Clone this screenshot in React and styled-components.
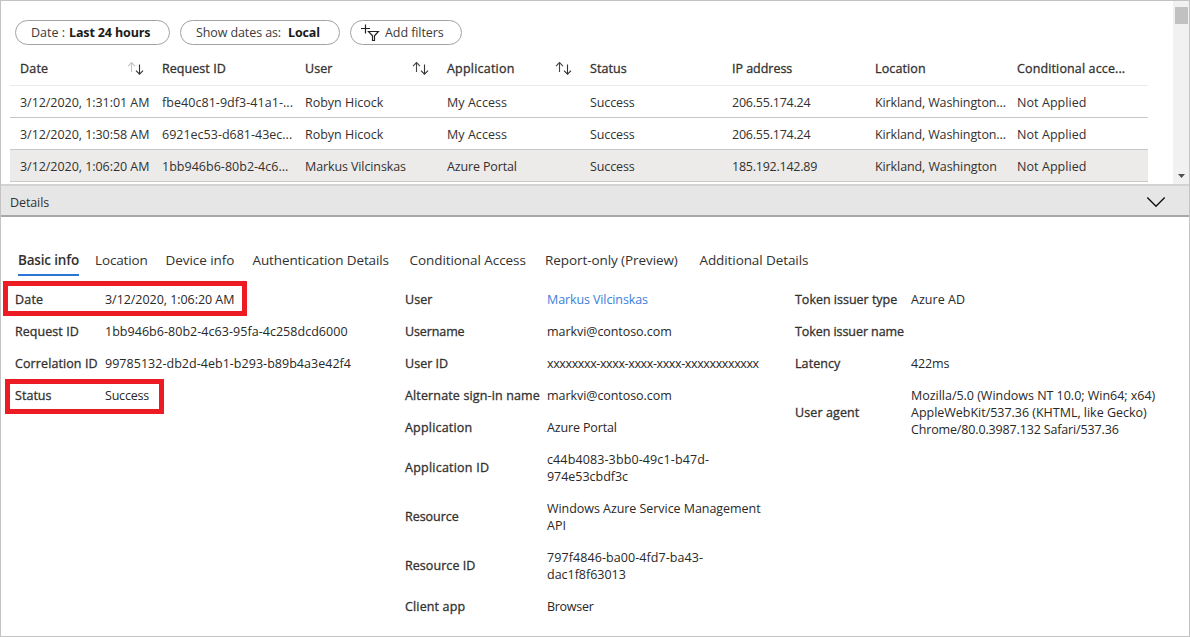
import React from 'react';
import styled, { createGlobalStyle, css } from 'styled-components';

const Global = createGlobalStyle`
  * { box-sizing: border-box; }
  body { margin: 0; background: #fff; }
`;

const Page = styled.div`
  width: 1190px;
  height: 637px;
  border: 1px solid #c3c3c3;
  background: #fff;
  color: #323130;
  font: 400 12.5px/17px "Open Sans", "Noto Sans", sans-serif;
  overflow: hidden;
  white-space: nowrap;
`;

const TopPane = styled.section`
  display: flex;
  justify-content: space-between;
  height: 183px;
`;

const ListArea = styled.div`
  padding: 19px 0 0 9px;
`;

const Filters = styled.div`
  display: flex;
  gap: 10px;
  padding-left: 5px;
`;

const Pill = styled.div`
  display: flex;
  align-items: center;
  height: 25px;
  width: ${(p) => p.$width}px;
  padding-left: ${(p) => p.$pad ?? 15}px;
  border: 1px solid #a3a3a3;
  border-radius: 13px;
  letter-spacing: ${(p) => p.$ls || 0}px;
  color: #3b3a39;
`;

const PillValue = styled.b`
  margin-left: ${(p) => p.$gap}px;
  font-weight: 700;
  letter-spacing: ${(p) => p.$ls}px;
  color: #1b1a19;
`;

const PillText = styled.span`
  margin-left: 5px;
`;

const columns = css`
  display: grid;
  grid-template-columns: 142px 143px 142px 143px 142px 143px 142px 1fr;
  width: 1138px;
  padding-left: 10px;
  align-items: center;
`;

const HeaderRow = styled.div`
  ${columns}
  height: 41px;
  padding-top: 6px;
  border-bottom: 1px solid #eaeaea;
`;

const HeaderCell = styled.div`
  display: flex;
  align-items: center;
  justify-content: space-between;
  padding-right: 18px;
`;

const medium = css`
  -webkit-text-stroke: 0.3px currentColor;
`;

const HeaderText = styled.span`
  ${medium}
  letter-spacing: ${(p) => p.$ls}px;
`;

const Row = styled.div`
  ${columns}
  height: 32px;
  padding-top: 1px;
  border-bottom: 1px solid #c8c8c8;
  background: ${(p) => (p.$selected ? '#edebe9' : 'transparent')};
`;

const Cell = styled.span`
  letter-spacing: ${(p) => p.$ls}px;
`;

const Scrollbar = styled.div`
  display: flex;
  flex-direction: column;
  justify-content: space-between;
  align-items: center;
  width: 16px;
  padding: 6px 1px 6px 2px;
  background: #f1f1f1;
`;

const Thumb = styled.div`
  width: 13px;
  height: 17px;
  background: #c1c1c1;
`;

const DetailsBar = styled.header`
  display: flex;
  align-items: center;
  justify-content: space-between;
  height: 33px;
  padding: 2px 23px 0 9px;
  border-top: 2px solid #d2d2d2;
  border-bottom: 2px solid #a8a8a8;
  background: #e6e6e6;
`;

const DetailsTitle = styled.span`
  padding-top: 1px;
  letter-spacing: -0.1px;
`;

const Tabs = styled.nav`
  display: grid;
  grid-template-columns: 77px 70.5px 87px 157px 135.5px 154.5px auto;
  justify-content: start;
  padding: 33px 0 0 17px;
  font-size: 13.5px;
  line-height: 20px;
`;

const Tab = styled.div`
  width: max-content;
  height: 26px;
  letter-spacing: ${(p) => p.$ls}px;
  ${(p) =>
    p.$active &&
    css`
      width: 61px;
      font-weight: 600;
      border-bottom: 2px solid #2b76d2;
    `}
`;

const Panels = styled.div`
  display: grid;
  grid-template-columns: 390px 390px 1fr;
  align-items: start;
  padding: 7px 0 0 14px;
`;

const Panel = styled.dl`
  margin: 0;
`;

const Pair = styled.div`
  position: relative;
  display: grid;
  grid-template-columns: ${(p) => p.$label}px auto;
  justify-content: start;
  align-items: center;
  padding: 7.5px 0;
`;

const Label = styled.dt`
  ${medium}
  letter-spacing: ${(p) => p.$ls}px;
`;

const Value = styled.dd`
  margin: 0;
  color: ${(p) => (p.$link ? '#3a80dc' : '#292827')};
`;

const Line = styled.div`
  min-height: 17px;
  letter-spacing: ${(p) => p.$ls}px;
`;

const Highlight = styled.div`
  position: absolute;
  top: ${(p) => p.$top}px;
  left: ${(p) => p.$left}px;
  width: ${(p) => p.$width}px;
  height: 35px;
  border: 5px solid #ed1c24;
`;

const SortIcon = ({ descending }) => (
  <svg width="18" height="14" viewBox="0 0 18 14" fill="none" strokeWidth="1.1">
    <path d="M5.5 11V1.5M2 5.1L5.5 1.6L9 5.1" stroke={descending ? '#c4c4c4' : '#444'} />
    <path d="M13.5 3.5V13M10 9.6L13.5 13.1L17 9.6" stroke="#333" />
  </svg>
);

const FilterIcon = () => (
  <svg width="19" height="18" viewBox="0 0 19 18" fill="none" stroke="#222" strokeWidth="1.2">
    <path d="M4.5 0.5V9.5M0 4.5H9" />
    <path d="M7.5 7.5H17.4L13.5 11.8V16.5H11.5V11.8Z" />
  </svg>
);

const Chevron = () => (
  <svg width="20" height="12" viewBox="0 0 20 12" fill="none" stroke="#111" strokeWidth="1.4">
    <path d="M1.3 1.5L10 10.2L18.7 1.5" />
  </svg>
);

const ScrollArrow = () => (
  <svg width="7" height="4" viewBox="0 0 7 4">
    <path d="M0 0H7L3.5 4Z" fill="#505050" />
  </svg>
);

const headers = [
  ['Date', 0.2, 'desc'],
  ['Request ID', 0.05],
  ['User', 0.05, 'both'],
  ['Application', 0.21, 'both'],
  ['Status', 0.08],
  ['IP address', -0.03],
  ['Location', 0.12],
  ['Conditional acce...', 0.13],
];

const kirklandCut = ['Kirkland, Washington...', -0.12];
const rows = [
  [['3/12/2020, 1:31:01 AM', -0.05], ['fbe40c81-9df3-41a1-...', 0.05], ['Robyn Hicock', -0.01], ['My Access', 0.05], ['Success', -0.12], ['206.55.174.24', -0.22], kirklandCut, ['Not Applied', 0.07]],
  [['3/12/2020, 1:30:58 AM', -0.05], ['6921ec53-d681-43ec...', 0], ['Robyn Hicock', -0.01], ['My Access', 0.05], ['Success', -0.12], ['206.55.174.24', -0.22], kirklandCut, ['Not Applied', 0.07]],
  [['3/12/2020, 1:06:20 AM', -0.05], ['1bb946b6-80b2-4c6...', 0.02], ['Markus Vilcinskas', -0.11], ['Azure Portal', -0.14], ['Success', -0.12], ['185.192.142.89', -0.24], ['Kirkland, Washington', -0.1], ['Not Applied', 0.07]],
];

const tabs = [
  ['Basic info', -0.18],
  ['Location', -0.14],
  ['Device info', -0.06],
  ['Authentication Details', -0.12],
  ['Conditional Access', -0.07],
  ['Report-only (Preview)', -0.08],
  ['Additional Details', -0.09],
];

const panels = [
  {
    label: 90,
    items: [
      { label: ['Date', 0.2], lines: [['3/12/2020, 1:06:20 AM', -0.05]], mark: { top: -2.5, left: -12, width: 244 } },
      { label: ['Request ID', 0.05], lines: [['1bb946b6-80b2-4c63-95fa-4c258dcd6000', 0.04]] },
      { label: ['Correlation ID', 0.1], lines: [['99785132-db2d-4eb1-b293-b89b4a3e42f4', 0.03]] },
      { label: ['Status', 0.04], lines: [['Success', -0.2]], mark: { top: -0.5, left: -10, width: 159 } },
    ],
  },
  {
    label: 142,
    items: [
      { label: ['User', 0.05], lines: [['Markus Vilcinskas', -0.11]], link: true },
      { label: ['Username', -0.11], lines: [['markvi@contoso.com', -0.06]] },
      { label: ['User ID', 0.03], lines: [['xxxxxxxx-xxxx-xxxx-xxxx-xxxxxxxxxxxx', -0.38]] },
      { label: ['Alternate sign-in name', 0.14], lines: [['markvi@contoso.com', -0.06]] },
      { label: ['Application', 0.2], lines: [['Azure Portal', -0.14]] },
      { label: ['Application ID', 0.23], lines: [['c44b4083-3bb0-49c1-b47d-', 0.12], ['974e53cbdf3c', -0.03]] },
      { label: ['Resource', -0.04], lines: [['Windows Azure Service Management', -0.05], ['API', 0]] },
      { label: ['Resource ID', 0.06], lines: [['797f4846-ba00-4fd7-ba43-', 0.08], ['dac1f8f63013', -0.02]] },
      { label: ['Client app', 0.15], lines: [['Browser', -0.28]] },
    ],
  },
  {
    label: 116,
    items: [
      { label: ['Token issuer type', -0.01], lines: [['Azure AD', 0.04]] },
      { label: ['Token issuer name', -0.07], lines: [['', 0]] },
      { label: ['Latency', 0.08], lines: [['422ms', -0.15]] },
      {
        label: ['User agent', 0.1],
        lines: [
          ['Mozilla/5.0 (Windows NT 10.0; Win64; x64)', -0.02],
          ['AppleWebKit/537.36 (KHTML, like Gecko)', -0.02],
          ['Chrome/80.0.3987.132 Safari/537.36', -0.15],
        ],
      },
    ],
  },
];

export default function App() {
  return (
    <Page>
      <Global />
      <TopPane>
        <ListArea>
          <Filters>
            <Pill $width={155}>
              Date :<PillValue $gap={4} $ls={-0.14}>Last 24 hours</PillValue>
            </Pill>
            <Pill $width={160} $ls={-0.1}>
              Show dates as:<PillValue $gap={7} $ls={-0.15}>Local</PillValue>
            </Pill>
            <Pill $width={112} $pad={10} $ls={-0.08}>
              <FilterIcon />
              <PillText>Add filters</PillText>
            </Pill>
          </Filters>
          <HeaderRow>
            {headers.map(([text, ls, sort]) => (
              <HeaderCell key={text}>
                <HeaderText $ls={ls}>{text}</HeaderText>
                {sort && <SortIcon descending={sort === 'desc'} />}
              </HeaderCell>
            ))}
          </HeaderRow>
          {rows.map((row, i) => (
            <Row key={i} $selected={i === 2}>
              {row.map(([text, ls], j) => (
                <Cell key={j} $ls={ls}>{text}</Cell>
              ))}
            </Row>
          ))}
        </ListArea>
        <Scrollbar>
          <Thumb />
          <ScrollArrow />
        </Scrollbar>
      </TopPane>
      <DetailsBar>
        <DetailsTitle>Details</DetailsTitle>
        <Chevron />
      </DetailsBar>
      <Tabs>
        {tabs.map(([text, ls], i) => (
          <Tab key={text} $ls={ls} $active={i === 0}>{text}</Tab>
        ))}
      </Tabs>
      <Panels>
        {panels.map((panel) => (
          <Panel key={panel.label}>
            {panel.items.map(({ label, lines, link, mark }) => (
              <Pair key={label[0]} $label={panel.label}>
                <Label $ls={label[1]}>{label[0]}</Label>
                <Value $link={link}>
                  {lines.map(([text, ls], i) => (
                    <Line key={i} $ls={ls}>{text}</Line>
                  ))}
                </Value>
                {mark && <Highlight $top={mark.top} $left={mark.left} $width={mark.width} />}
              </Pair>
            ))}
          </Panel>
        ))}
      </Panels>
    </Page>
  );
}
